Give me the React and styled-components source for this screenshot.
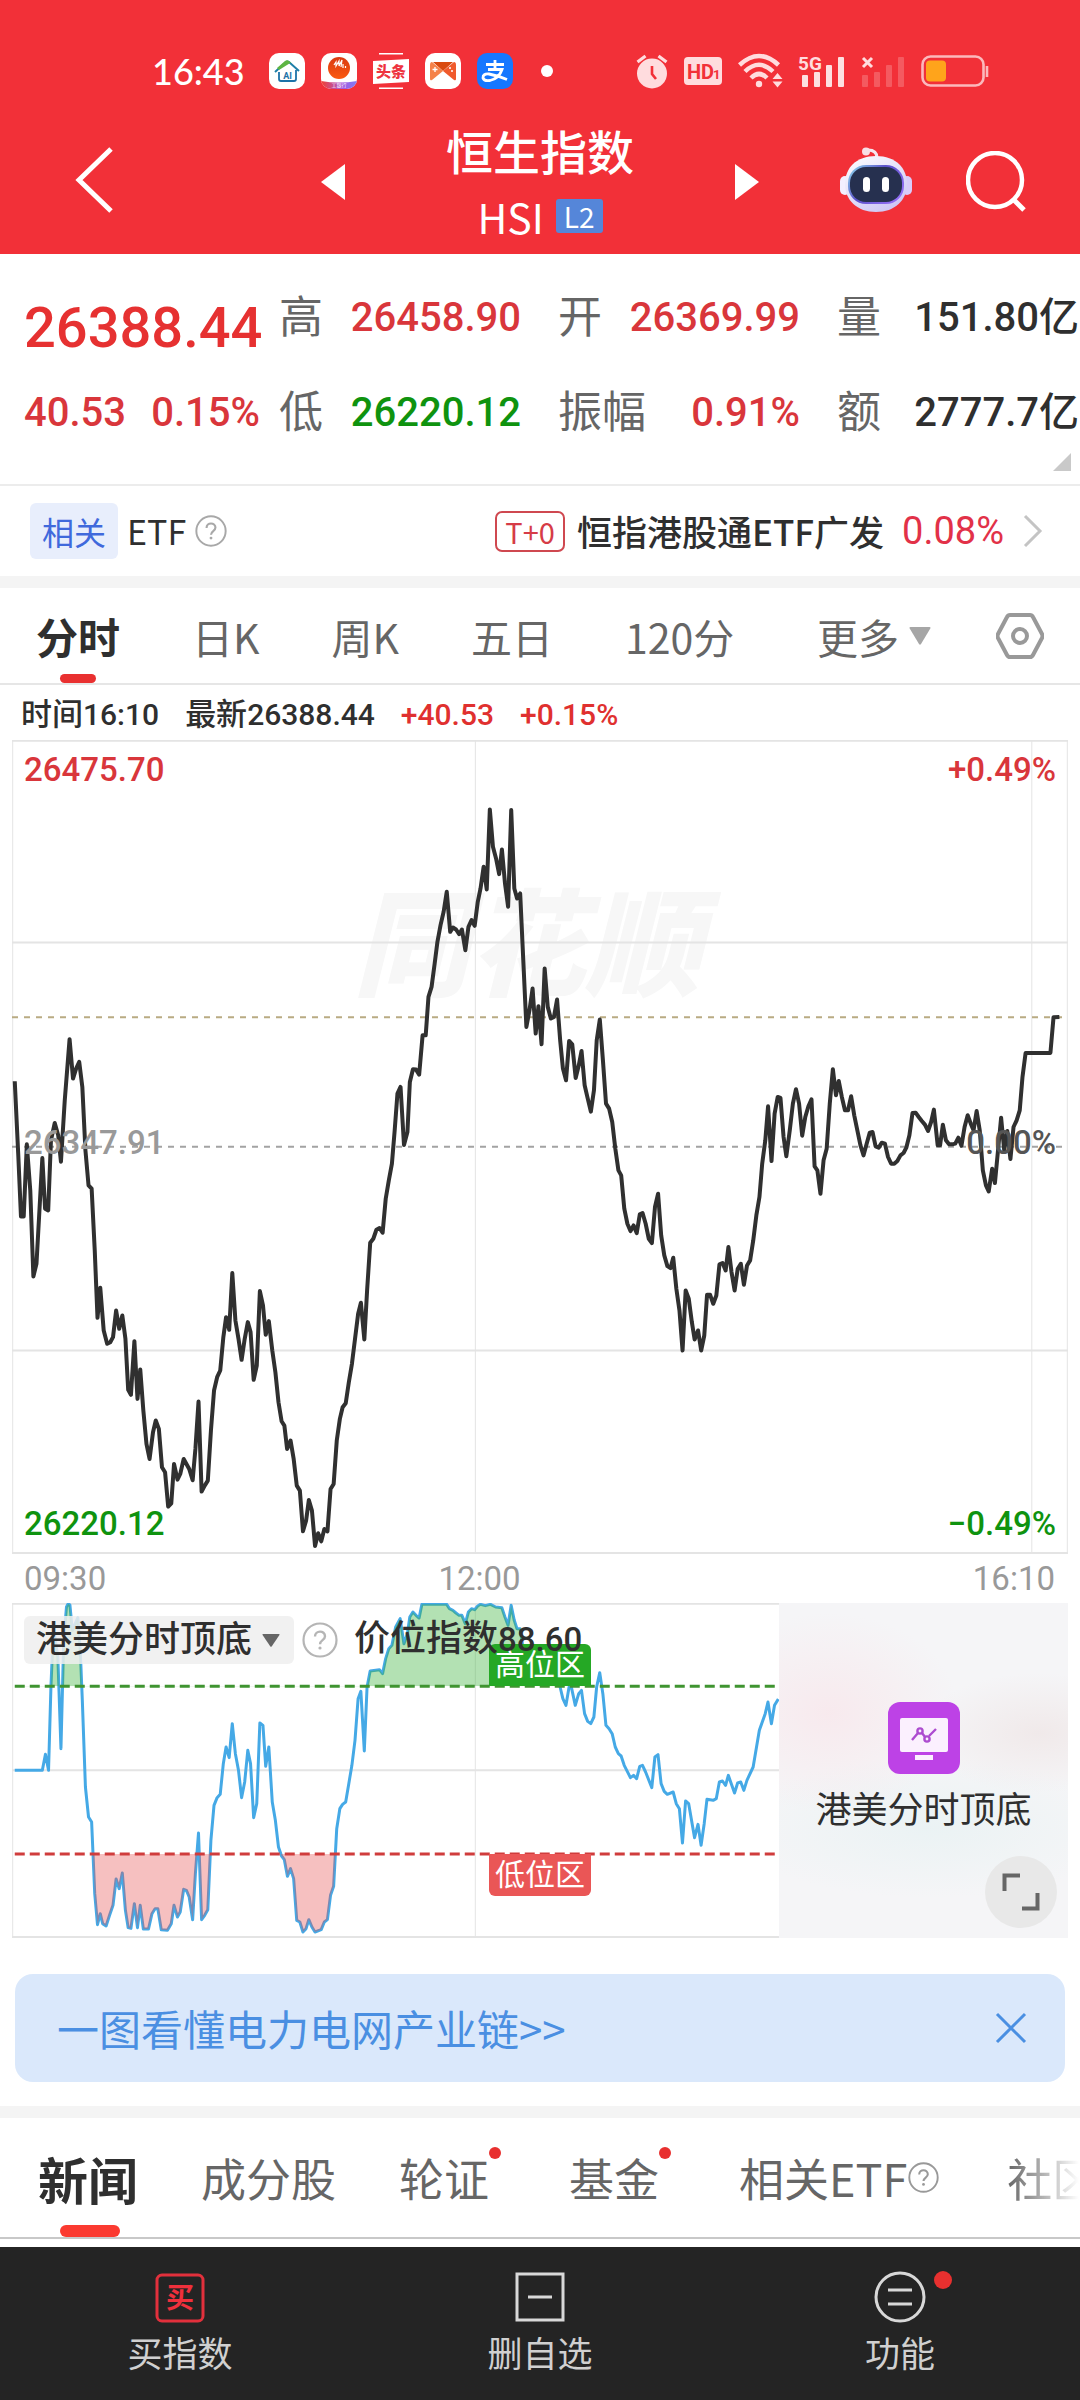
import React from "react";
import styled, { createGlobalStyle } from "styled-components";

const GlobalStyle = createGlobalStyle`
  * {
    box-sizing: border-box;
  }

  body {
    margin: 0;
    background-color: #ffffff;
    color: #2f2f2f;
    font-family: Roboto, "Noto Sans CJK SC", sans-serif;
  }

  button,
  select {
    margin: 0;
    padding: 0;
    border: none;
    background: none;
    color: inherit;
    font: inherit;
    cursor: pointer;
  }

  svg {
    display: block;
    flex-shrink: 0;
  }
`;

const colors = {
  brand: "#f23038",
  up: "#d9363b",
  down: "#0f930f",
  text: "#2f2f2f",
  muted: "#666666",
  axis: "#999999",
  line: "#e6e6e6",
};

const Page = styled.div`
  width: 100%;
  overflow: hidden;
`;

/* ---------- header ---------- */

const Header = styled.header`
  background-color: ${colors.brand};
  color: #ffffff;
`;

const StatusBar = styled.div`
  display: flex;
  align-items: center;
  justify-content: space-between;
  height: 104px;
  padding: 38px 91px 0 152px;
`;

const StatusGroup = styled.div`
  display: flex;
  align-items: center;
  gap: ${(props) => props.$gap}px;
`;

const Clock = styled.time`
  margin-right: 8px;
  font-family: Lato, sans-serif;
  font-size: 36px;
  line-height: 36px;
  font-weight: 500;
`;

const Dot = styled.span`
  width: 12px;
  height: 12px;
  margin-left: 12px;
  border-radius: 50%;
  background-color: #ffffff;
`;

const NavBar = styled.div`
  display: grid;
  grid-template-columns: 1fr 440px 1fr;
  align-items: center;
  height: 150px;
  padding-top: 6px;
`;

const NavBack = styled.div`
  padding-left: 75px;
`;

const NavCenter = styled.div`
  display: flex;
  align-items: center;
  justify-content: space-between;
`;

const NavActions = styled.div`
  display: flex;
  align-items: center;
  justify-content: flex-end;
  gap: 54px;
  padding-right: 54px;
`;

const TitleBlock = styled.div`
  padding-top: 8px;
  text-align: center;
`;

const Title = styled.h1`
  margin: 0;
  font-size: 47px;
  line-height: 60px;
  font-weight: 500;
`;

const Code = styled.div`
  display: flex;
  align-items: center;
  justify-content: center;
  gap: 12px;
  font-family: "Noto Sans CJK SC", sans-serif;
  font-size: 41px;
  line-height: 64px;
`;

const LevelBadge = styled.span`
  padding: 0 8px;
  border-radius: 3px;
  background-color: #5586d9;
  font-size: 28px;
  line-height: 34px;
`;

/* ---------- quote ---------- */

const Quote = styled.section`
  position: relative;
  display: flex;
  gap: 19px;
  height: 232px;
  padding: 32px 1px 0 24px;
  border-bottom: 2px solid #ececec;
`;

const PriceBlock = styled.div`
  display: flex;
  flex-direction: column;
  gap: 21px;
  width: 236px;
  padding-top: 10px;
`;

const Price = styled.strong`
  color: #e63131;
  font-size: 56px;
  line-height: 64px;
  font-weight: 500;
`;

const Change = styled.div`
  display: flex;
  align-items: center;
  justify-content: space-between;
  color: ${colors.up};
  font-size: 40px;
  line-height: 64px;
  font-weight: 500;
`;

const StatGrid = styled.div`
  display: grid;
  flex: 1;
  grid-template-columns: repeat(3, 1fr);
  align-content: start;
  gap: 31px 37px;
`;

const Stat = styled.div`
  display: flex;
  align-items: center;
  justify-content: space-between;
  line-height: 64px;
  white-space: nowrap;
`;

const StatLabel = styled.span`
  color: ${colors.muted};
  font-size: 44px;
`;

const StatValue = styled.span`
  color: ${(props) => props.$color || colors.text};
  font-size: 40px;
  font-weight: 500;
`;

const Corner = styled.svg`
  position: absolute;
  right: 9px;
  bottom: 13px;
`;

/* ---------- related ETF ---------- */

const EtfRow = styled.section`
  display: flex;
  align-items: center;
  justify-content: space-between;
  height: 102px;
  padding: 0 36px 0 30px;
  border-bottom: 12px solid #f4f4f4;
  font-family: "Noto Sans CJK SC", sans-serif;
`;

const EtfSide = styled.div`
  display: flex;
  align-items: center;
  gap: 9px;
  font-size: 34px;
  line-height: 56px;
`;

const RelatedTag = styled.span`
  padding: 0 12px;
  border-radius: 6px;
  background-color: #e8eefc;
  color: #4069dc;
  font-size: 32px;
`;

const EtfLink = styled.a`
  display: flex;
  align-items: center;
  color: ${colors.text};
  font-size: 35px;
  line-height: 56px;
  font-weight: 500;
  text-decoration: none;
`;

const T0Tag = styled.span`
  margin-right: 12px;
  padding: 0 8px;
  border: 2px solid #cf4850;
  border-radius: 7px;
  color: #d63c47;
  font-size: 29px;
  line-height: 37px;
  font-weight: 400;
`;

const EtfChange = styled.span`
  margin: 0 18px;
  color: #e23148;
  font-family: Roboto, sans-serif;
  font-size: 38px;
  font-weight: 400;
`;

/* ---------- period tabs ---------- */

const PeriodBar = styled.nav`
  display: flex;
  align-items: stretch;
  gap: 65px;
  height: 97px;
  padding: 0 36px;
  border-bottom: 2px solid ${colors.line};
  font-family: "Noto Sans CJK SC", sans-serif;
`;

const PeriodTabs = styled.div`
  display: flex;
  flex: 1;
  align-items: stretch;
  gap: 72px;
`;

const PeriodTab = styled.button`
  position: relative;
  display: flex;
  align-items: center;
  gap: 10px;
  color: ${(props) => (props.$active ? colors.text : colors.muted)};
  font-size: ${(props) => (props.$active ? 42 : 41)}px;
  font-weight: ${(props) => (props.$active ? 700 : 400)};

  &:last-child {
    margin-left: auto;
  }

  &::after {
    content: "";
    display: ${(props) => (props.$active ? "block" : "none")};
    position: absolute;
    left: 50%;
    bottom: 0;
    width: 36px;
    height: 9px;
    margin-left: -18px;
    border-radius: 5px;
    background-color: #e93030;
  }
`;

const InfoLine = styled.div`
  display: flex;
  align-items: center;
  gap: 26px;
  height: 55px;
  padding: 4px 21px 0;
  font-size: 31px;
  font-weight: 500;
  line-height: 48px;
`;

const InfoNumber = styled.span`
  color: ${(props) => props.$color || "inherit"};
  font-size: 30px;
`;

/* ---------- price chart ---------- */

const ChartArea = styled.section`
  margin: 0 12px;
`;

const PriceChart = styled.div`
  position: relative;
  height: 814px;
`;

const ChartSvg = styled.svg`
  position: relative;
  width: 100%;
  height: 100%;
`;

const Watermark = styled.div`
  position: absolute;
  top: 126px;
  left: 0;
  width: 100%;
  padding-right: 26px;
  color: #f7f7f7;
  font-family: "Noto Sans CJK SC", sans-serif;
  font-size: 116px;
  font-style: italic;
  font-weight: 900;
  line-height: 140px;
  text-align: center;
`;

const ChartLabel = styled.span`
  position: absolute;
  top: ${(props) => props.$top}px;
  ${(props) => props.$side}: 12px;
  color: ${(props) => props.$color};
  font-size: 33px;
  font-weight: 500;
  line-height: 40px;
`;

const TimeAxis = styled.div`
  display: grid;
  grid-template-columns: 1fr 1fr 1fr;
  padding: 4px 13px 4px 12px;
  color: ${colors.axis};
  font-size: 33px;
  line-height: 41px;

  span:nth-child(2) {
    padding-right: 120px;
    text-align: center;
  }

  span:nth-child(3) {
    text-align: right;
  }
`;

/* ---------- indicator ---------- */

const Indicator = styled.div`
  display: grid;
  grid-template-columns: 1fr 289px;
  grid-template-rows: 100%;
  height: 335px;
`;

const IndicatorPlot = styled.div`
  position: relative;
`;

const IndicatorBar = styled.div`
  position: absolute;
  top: 12px;
  left: 12px;
  display: flex;
  align-items: center;
  font-size: 36px;
  font-weight: 500;
  line-height: 48px;
  white-space: nowrap;
`;

const IndicatorSelect = styled.label`
  position: relative;
  margin-right: 8px;
  border-radius: 6px;
  background-color: rgba(238, 238, 238, 0.85);

  select {
    height: 48px;
    padding: 0 41px 0 12px;
    appearance: none;
    line-height: 48px;
  }

  svg {
    position: absolute;
    top: 18px;
    right: 14px;
    pointer-events: none;
  }
`;

const IndicatorValue = styled.span`
  margin-left: 16px;
`;

const IndicatorNumber = styled.span`
  font-size: 33px;
`;

const ZoneTag = styled.span`
  position: absolute;
  left: 477px;
  top: ${(props) => props.$top}px;
  padding: 0 6px;
  border-radius: ${(props) => (props.$low ? "0 0 6px 6px" : "6px 6px 0 0")};
  background-color: ${(props) => (props.$low ? "#ea5656" : "#25a825")};
  color: #ffffff;
  font-size: 30px;
  line-height: 42px;
`;

const PromoCard = styled.div`
  position: relative;
  display: flex;
  flex-direction: column;
  align-items: center;
  padding-top: 99px;
  background-color: #f5f5f7;
  background-image: radial-gradient(
      ellipse 130px 100px at 50px 110px,
      rgba(250, 222, 228, 0.5),
      rgba(250, 222, 228, 0)
    ),
    radial-gradient(
      ellipse 120px 60px at 260px 130px,
      rgba(238, 228, 228, 0.7),
      rgba(238, 228, 228, 0)
    ),
    radial-gradient(
      ellipse 200px 70px at 150px 225px,
      rgba(232, 242, 243, 0.8),
      rgba(232, 242, 243, 0)
    );
  font-size: 36px;
  line-height: 48px;
`;

const PromoText = styled.span`
  margin-top: 13px;
`;

const ExpandButton = styled.button`
  position: absolute;
  right: 11px;
  bottom: 10px;
  display: grid;
  place-items: center;
  width: 72px;
  height: 72px;
  border-radius: 50%;
  background-color: #e8e8e8;
`;

/* ---------- banner and news tabs ---------- */

const Banner = styled.aside`
  display: flex;
  align-items: center;
  justify-content: space-between;
  height: 108px;
  margin: 36px 15px 24px;
  padding: 0 38px 0 42px;
  border-radius: 18px;
  background-color: #dae8fb;
  color: #4a8fe2;
`;

const BannerLink = styled.a`
  color: inherit;
  font-family: "Noto Sans CJK SC", sans-serif;
  font-size: 42px;
  line-height: 60px;
  text-decoration: none;
`;

const NewsTabs = styled.nav`
  display: flex;
  gap: 63px;
  height: 133px;
  padding-left: 38px;
  border-top: 12px solid #f4f4f4;
  border-bottom: 2px solid #c8c8c8;
  overflow: hidden;
  font-family: "Noto Sans CJK SC", sans-serif;
`;

const NewsTab = styled.button`
  position: relative;
  display: flex;
  align-items: center;
  flex-shrink: 0;
  color: ${(props) => (props.$active ? colors.text : colors.muted)};
  font-size: ${(props) => (props.$active ? 50 : 45)}px;
  font-weight: ${(props) => (props.$active ? 700 : 400)};
  -webkit-mask-image: ${(props) =>
    props.$fading
      ? "linear-gradient(to right, #000000, rgba(0, 0, 0, 0) 80%)"
      : "none"};

  &::after {
    content: "";
    display: ${(props) => (props.$active ? "block" : "none")};
    position: absolute;
    left: 50%;
    bottom: 0;
    width: 60px;
    height: 12px;
    margin-left: -28px;
    border-radius: 6px;
    background-color: #fb3a30;
  }
`;

const NewDot = styled.span`
  align-self: flex-start;
  width: 12px;
  height: 12px;
  margin: 29px 5px 0 0;
  border-radius: 50%;
  background-color: #e8302f;
`;

const TabHelp = styled.span`
  padding: 0 5px 0 1px;
`;

/* ---------- bottom bar ---------- */

const BottomBar = styled.footer`
  display: grid;
  grid-template-columns: repeat(3, 1fr);
  margin-top: 8px;
  height: 153px;
  background-color: #242424;
`;

const BottomButton = styled.button`
  display: flex;
  flex-direction: column;
  align-items: center;
  padding-top: 24px;
  color: #d0d0d0;
  font-size: 35px;
  line-height: 48px;
`;

const BottomIcon = styled.span`
  position: relative;
  margin-bottom: 9px;
`;

const AlertDot = styled.span`
  position: absolute;
  top: 0;
  right: -26px;
  width: 18px;
  height: 18px;
  border-radius: 50%;
  background-color: #e8302f;
`;

/* ---------- data ---------- */

const stats = [
  { label: "高", value: "26458.90", color: colors.up },
  { label: "开", value: "26369.99", color: colors.up },
  { label: "量", value: "151.80亿" },
  { label: "低", value: "26220.12", color: colors.down },
  { label: "振幅", value: "0.91%", color: colors.up },
  { label: "额", value: "2777.7亿" },
];

const pricePoints = `45,1023 55,1240 63,1428 71,1428 80,1212 90,1350 99,1608 108,1570 125,1253 133,1405
142,1410 150,1200 161,1148 171,1185 179,1264 190,1080 204,897 214,1015 223,985 232,965
241,1040 250,1230 259,1335 268,1345 277,1530 285,1732 293,1642 303,1770 313,1810 322,1805
330,1790 339,1710 348,1765 357,1725 366,1795 374,1948 382,1963 392,1802 401,1975 409,1887
418,2010 427,2110 436,2155 446,2075 454,2040 463,2065 472,2180 481,2195 490,2298 499,2288
507,2170 517,2217 525,2200 535,2155 551,2185 561,2219 569,2125 578,1983 587,2253 596,2235
605,2220 614,2070 623,1950 632,1910 641,1890 650,1790 658,1730 667,1768 676,1598 685,1740
694,1795 703,1858 712,1795 721,1745 729,1775 738,1918 747,1875 756,1652 765,1695 773,1783
782,1742 792,1830 801,1895 810,1985 819,2042 827,2055 835,2125 845,2100 854,2155 863,2235
872,2250 881,2372 890,2340 898,2278 907,2310 916,2416 925,2378 934,2402 943,2365 952,2372
961,2245 970,2230 979,2100 988,2035 996,2000 1005,1988 1014,1925 1023,1870 1032,1795 1041,1720
1049,1687 1059,1797 1067,1650 1076,1507 1085,1495 1094,1468 1103,1463 1112,1477 1121,1375 1130,1320
1139,1270 1147,1170 1155,1060 1164,1040 1174,1214 1184,1175 1191,1025 1200,987 1209,988 1218,1003
1228,885 1237,885 1245,770 1254,740 1263,670 1271,605 1280,555 1289,515 1298,455 1308,575
1316,562 1325,568 1334,582 1342,568 1352,630 1361,560 1370,540 1379,557 1388,485 1396,445
1405,380 1414,448 1423,208 1432,320 1441,355 1450,402 1458,328 1467,430 1476,500 1485,210
1494,445 1502,475 1511,460 1520,660 1529,860 1538,810 1547,745 1556,880 1564,798 1573,912
1582,685 1591,800 1600,835 1609,830 1618,778 1627,900 1635,985 1644,1020 1653,902 1662,912
1672,1013 1681,975 1689,932 1698,1035 1707,1075 1716,1114 1725,1050 1733,900 1742,838 1751,960
1760,1090 1769,1105 1778,1145 1787,1225 1796,1290 1804,1305 1813,1405 1822,1450 1831,1472 1840,1455
1849,1478 1858,1422 1866,1418 1875,1450 1884,1495 1893,1508 1902,1400 1911,1360 1920,1485 1929,1545
1938,1577 1947,1583 1955,1552 1964,1645 1973,1710 1982,1830 1991,1650 2000,1675 2009,1745 2017,1797
2027,1770 2036,1830 2045,1785 2053,1663 2062,1663 2071,1690 2080,1665 2089,1572 2098,1568 2107,1590
2115,1520 2124,1595 2133,1650 2142,1585 2151,1570 2160,1633 2169,1575 2178,1560 2187,1500 2196,1425
2205,1370 2213,1270 2222,1200 2230,1098 2240,1262 2249,1120 2258,1070 2266,1073 2275,1190 2283,1248
2293,1170 2302,1090 2311,1047 2320,1090 2329,1186 2338,1130 2347,1098 2356,1077 2365,1278 2373,1290
2382,1360 2391,1260 2400,1225 2409,1090 2418,987 2427,1065 2435,1022 2444,1070 2453,1110 2462,1110
2471,1068 2480,1125 2489,1170 2498,1215 2507,1245 2516,1210 2525,1177 2533,1175 2542,1218 2551,1222
2560,1207 2569,1210 2578,1250 2587,1270 2596,1270 2605,1262 2614,1245 2623,1238 2631,1222 2640,1185
2649,1118 2658,1117 2667,1130 2676,1142 2685,1153 2694,1172 2703,1145 2711,1108 2722,1215 2729,1215
2737,1153 2746,1200 2755,1212 2764,1212 2773,1210 2782,1192 2791,1216 2800,1160 2809,1125 2818,1150
2826,1170 2835,1112 2844,1170 2853,1290 2862,1335 2870,1353 2880,1285 2888,1328 2897,1230 2906,1132
2915,1230 2924,1172 2933,1256 2942,1160 2951,1140 2960,1110 2968,1010 2977,938 3049,938 3058,831 3075,830`;

const indexPoints = `45,540 125,540 134,492 143,540 150,288 154,190 160,130 170,200 179,475 187,150
195,50 200,40 205,44 212,120 228,82 235,180 241,330 250,590 259,680 268,695
277,910 285,1003 293,970 300,1000 310,1007 320,975 330,945 339,866 348,895 357,848
366,960 374,1012 382,1014 392,940 401,1012 409,945 418,1016 433,1016 443,970 452,955
460,955 470,1018 488,1020 499,1000 507,945 517,980 525,965 535,897 543,900 551,920
561,988 569,850 578,728 587,988 596,975 605,958 614,750 623,645 632,622 641,612
650,520 658,470 667,502 676,400 685,490 694,540 703,622 712,575 721,480 729,520
738,682 747,640 756,398 765,405 773,528 782,470 792,635 801,690 810,770 819,797
827,808 836,858 845,835 854,865 863,990 872,995 881,1025 890,1015 898,988 907,1010
916,1025 934,1018 943,995 952,988 961,915 970,888 979,715 988,655 996,642 1005,635
1014,580 1023,525 1032,450 1041,325 1049,303 1059,482 1067,290 1076,242 1103,238 1112,250
1121,205 1130,175 1139,165 1150,110 1163,85 1174,160 1184,130 1191,80 1200,65 1209,75
1218,83 1226,42 1298,42 1306,55 1316,60 1325,68 1334,75 1342,75 1352,100 1361,65
1370,55 1379,58 1388,47 1396,42 1410,46 1425,42 1440,50 1458,52 1467,80 1476,105
1485,45 1494,90 1502,115 1511,115 1529,240 1547,210 1565,250 1582,200 1600,235 1618,225
1627,290 1635,325 1644,345 1653,290 1660,292 1671,345 1681,310 1689,300 1698,370 1707,393
1716,400 1725,380 1733,290 1742,247 1751,310 1760,405 1769,415 1778,430 1787,470 1796,490
1804,497 1813,525 1831,562 1840,555 1849,565 1858,528 1866,525 1875,545 1893,592 1902,500
1911,493 1920,580 1929,603 1938,612 1955,605 1964,640 1973,655 1982,758 1991,632 2000,640
2017,742 2027,702 2036,765 2045,700 2053,627 2071,630 2080,625 2089,575 2098,572 2107,585
2115,555 2133,608 2142,578 2151,575 2160,600 2169,570 2187,530 2205,420 2222,370 2230,335
2240,400 2249,345 2260,326`;

/* ---------- icons ---------- */

const HelpIcon = ({ size, color = "#b5b5b5" }) => (
  <svg width={size} height={size} viewBox="0 0 36 36" fill="none" stroke={color}>
    <circle cx="18" cy="18" r="16.5" strokeWidth="2.2" />
    <path
      d="M13 14.5c0-6.500 10-6.500 10-.3 0 4-5 3.800-5 8"
      strokeWidth="2.400"
    />
    <circle cx="18" cy="26" r="1.600" fill={color} stroke="none" />
  </svg>
);

const TriangleDown = ({ width, height, color }) => (
  <svg width={width} height={height} viewBox="0 0 22 18" preserveAspectRatio="none">
    <path d="M1.500 0h19q1.500 0 .8 1.500L12 17q-1 1.400-2 0L.7 1.500Q0 0 1.500 0z" fill={color} />
  </svg>
);

const HomeAiIcon = () => (
  <svg width="36" height="36" viewBox="0 0 36 36">
    <rect width="36" height="36" rx="10" fill="#ffffff" />
    <path d="M6 19 17 9q1.500-1 3 0l10 9" fill="none" stroke="#1f7fa8" strokeWidth="2" />
    <path d="M8 15l8-7q2-1.500 4 0l2 1.500L10 17z" fill="#5db542" />
    <path d="M10 19v7q0 2 2 2h13q2 0 2-2v-9" fill="none" stroke="#1d72a8" strokeWidth="1.800" />
    <text x="18.500" y="25.500" fontSize="9" fontWeight="700" textAnchor="middle" fill="#1d72a8">
      AI
    </text>
  </svg>
);

const BankIcon = () => (
  <svg width="36" height="36" viewBox="0 0 36 36">
    <defs>
      <linearGradient id="bankBall" x1="0" y1="0" x2="0" y2="1">
        <stop offset="0" stopColor="#d93a12" />
        <stop offset="1" stopColor="#fb5a10" />
      </linearGradient>
      <linearGradient id="bankStrip" x1="0" y1="0" x2="1" y2="0">
        <stop offset="0" stopColor="#f2402f" />
        <stop offset="0.600" stopColor="#a45be0" />
        <stop offset="1" stopColor="#7f7cf5" />
      </linearGradient>
      <clipPath id="bankClip">
        <rect width="36" height="36" rx="10" />
      </clipPath>
    </defs>
    <g clipPath="url(#bankClip)">
      <rect width="36" height="36" fill="#ffffff" />
      <path d="M0 28q18 3 36 0v8H0z" fill="url(#bankStrip)" />
    </g>
    <circle cx="18" cy="15" r="11" fill="url(#bankBall)" />
    <path
      d="M13 12l2-3v4l3-5v5l3-6-1 7M22 15v-4M24.500 15v-2"
      fill="none"
      stroke="#ffffff"
      strokeWidth="1.200"
    />
    <text x="18" y="34" fontSize="5" textAnchor="middle" fill="#ffffff">
      工银行
    </text>
  </svg>
);

const NewsIcon = () => (
  <svg width="36" height="36" viewBox="0 0 36 36">
    <path d="M6 .8h24M6 35.200h24" stroke="#ffffff" strokeWidth="1.500" />
    <path d="M0 8l36-2v23L0 31z" fill="#ffffff" />
    <text x="18" y="24" fontSize="15" fontWeight="900" textAnchor="middle" fill="#ee3340">
      头条
    </text>
  </svg>
);

const GameIcon = () => (
  <svg width="36" height="36" viewBox="0 0 36 36">
    <rect width="36" height="36" rx="10" fill="#ffffff" />
    <path d="M8 9h20l-10 9z" fill="#d94a0e" />
    <path d="M7 9q-2 0-2 3v14q0 2 2 1l11-9z" fill="#f58249" />
    <path d="M29 9q2 0 2 3v14q0 2-2 1l-11-9z" fill="#f05a2c" />
    <path d="M10 14v5M7.500 16.500h5" stroke="#ffffff" strokeWidth="1.300" />
    <circle cx="25" cy="15" r="1" fill="#ffffff" />
    <circle cx="27" cy="18" r="1" fill="#ffffff" />
  </svg>
);

const PayIcon = () => (
  <svg width="36" height="36" viewBox="0 0 36 36">
    <rect width="36" height="36" rx="10" fill="#1677ff" />
    <path
      d="M9 11.500h18M18 7v9M11 16.500h14q-3 9-12 11-6 .8-7-2.500-.3-4.500 6-4 8 1.500 18 5.500"
      fill="none"
      stroke="#ffffff"
      strokeWidth="2.800"
    />
  </svg>
);

const AlarmIcon = () => (
  <svg width="32" height="36" viewBox="0 0 32 36">
    <circle cx="16" cy="20.500" r="15" fill="#ffdcde" />
    <path d="M1.500 9l8-6M30.500 9l-8-6" stroke="#ffdcde" strokeWidth="3.200" />
    <path d="M16 13v8l4 5" fill="none" stroke={colors.brand} strokeWidth="2.600" />
  </svg>
);

const HdIcon = () => (
  <svg width="40" height="30" viewBox="0 0 40 30">
    <rect x="1" y="1" width="38" height="28" rx="4" fill="#ffdcde" />
    <text x="4" y="22.500" fontSize="20" fontWeight="700" fill={colors.brand}>
      HD
    </text>
    <text x="30" y="22.500" fontSize="13" fontWeight="700" fill={colors.brand}>
      1
    </text>
  </svg>
);

const WifiIcon = () => (
  <svg width="45" height="36" viewBox="0 0 45 36" fill="none" stroke="#ffdcde">
    <path d="M1.500 12Q21 -6 40.500 12" strokeWidth="4.500" />
    <path d="M7 18.500Q21 5 35 18.500" strokeWidth="4.500" />
    <path d="M13 25Q21 17 29 25" strokeWidth="4.500" />
    <circle cx="21" cy="31" r="3.200" fill="#ffdcde" stroke="none" />
    <path d="M39.500 20l5 6h-10zM39.500 34.500l5-6h-10z" fill="#ffdcde" stroke="none" />
  </svg>
);

const SignalBars = ({ opacity }) => (
  <g fill="#ffffff" opacity={opacity}>
    <rect x="4" y="22" width="6" height="12" rx="1" />
    <rect x="16" y="19" width="6" height="15" rx="1" />
    <rect x="28" y="12" width="6" height="22" rx="1" />
    <rect x="40" y="4" width="6" height="30" rx="1" />
  </g>
);

const Signal5gIcon = () => (
  <svg width="48" height="36" viewBox="0 0 48 36" overflow="visible">
    <SignalBars opacity="0.850" />
    <text x="0" y="17" fontSize="19" fontWeight="700" fill="#ffdcde">
      5G
    </text>
  </svg>
);

const NoSignalIcon = () => (
  <svg width="45" height="36" viewBox="3 0 45 36">
    <SignalBars opacity="0.200" />
    <path d="M5 5l9 9M14 5l-9 9" stroke="#ffdcde" strokeWidth="3" />
  </svg>
);

const BatteryIcon = () => (
  <svg width="68" height="32" viewBox="0 0 68 32">
    <rect x="1.500" y="1.500" width="61" height="29" rx="8" fill="none" stroke="#fbb9bc" strokeWidth="2.600" />
    <rect x="5" y="5.500" width="20" height="21" rx="4" fill="#ffa41b" />
    <path d="M66 11v11" stroke="#fbb9bc" strokeWidth="2.600" />
  </svg>
);

const RobotIcon = () => (
  <svg width="72" height="70" viewBox="0 0 72 70">
    <defs>
      <linearGradient id="robotShell" x1="0" y1="0" x2="0.600" y2="1">
        <stop offset="0" stopColor="#ffffff" />
        <stop offset="1" stopColor="#cfc8f5" />
      </linearGradient>
      <linearGradient id="robotRim" x1="0" y1="0" x2="1" y2="0.600">
        <stop offset="0" stopColor="#8fe0ee" />
        <stop offset="0.500" stopColor="#5b50c9" />
        <stop offset="1" stopColor="#8f6cf2" />
      </linearGradient>
    </defs>
    <path d="M37 11q0-8-9-8" fill="none" stroke="#f5e6ee" strokeWidth="3" />
    <circle cx="26" cy="4.500" r="4" fill="#f8dfe6" />
    <rect x="0" y="29" width="10" height="19" rx="5" fill="#f3efff" />
    <rect x="62" y="29" width="10" height="19" rx="5" fill="#d9ccfa" />
    <path
      d="M36 9c20 0 31 12 31 28S55 65 36 65 5 53 5 37 16 9 36 9z"
      fill="url(#robotShell)"
    />
    <rect x="8" y="18" width="56" height="39" rx="18" fill="url(#robotRim)" />
    <rect x="10" y="20" width="52" height="35" rx="16" fill="#26304f" />
    <rect x="23" y="30" width="7" height="15" rx="3.500" fill="#ffffff" />
    <rect x="42" y="30" width="7" height="15" rx="3.500" fill="#ffffff" />
  </svg>
);

const PriceSvg = () => (
  <ChartSvg
    viewBox="37 0 3063 2440"
    preserveAspectRatio="none"
    fill="none"
    role="img"
    aria-label="分时"
  >
    <g stroke="#e4e4e4" strokeWidth="2">
      <path d="M37 2H3100M37 2437H3100M37 607H3100M37 1830H3100" vectorEffect="non-scaling-stroke" />
      <path
        d="M39 0V2440M3098 0V2440M1381 0V2440M2995 0V2440"
        vectorEffect="non-scaling-stroke"
        strokeWidth="1"
      />
    </g>
    <path
      d="M37 831H3085"
      stroke="#b9ab83"
      strokeWidth="2"
      strokeDasharray="6 6"
      vectorEffect="non-scaling-stroke"
    />
    <path
      d="M37 1219H3085"
      stroke="#a3a3a3"
      strokeWidth="2"
      strokeDasharray="6 6"
      vectorEffect="non-scaling-stroke"
    />
    <polyline
      points={pricePoints}
      stroke="#303030"
      strokeWidth="4"
      strokeLinejoin="round"
      vectorEffect="non-scaling-stroke"
    />
  </ChartSvg>
);

const IndicatorSvg = () => (
  <ChartSvg
    viewBox="37 38 2225 1005"
    preserveAspectRatio="none"
    fill="none"
    role="img"
    aria-label="价位指数"
  >
    <defs>
      <clipPath id="highZone">
        <rect x="37" y="38" width="1590" height="250" />
      </clipPath>
      <clipPath id="lowZone">
        <rect x="37" y="791" width="2225" height="252" />
      </clipPath>
    </defs>
    <g stroke="#e4e4e4">
      <path d="M37 40H2262M37 1040H2262M37 540H2262" strokeWidth="2" vectorEffect="non-scaling-stroke" />
      <path d="M39 38V1043M1381 38V1043" strokeWidth="1" vectorEffect="non-scaling-stroke" />
    </g>
    <polyline
      points={indexPoints}
      stroke="#45a9e6"
      strokeWidth="3"
      strokeLinejoin="round"
      vectorEffect="non-scaling-stroke"
    />
    <polygon
      points={`45,288 ${indexPoints} 2260,288`}
      fill="rgba(55, 175, 55, 0.380)"
      clipPath="url(#highZone)"
    />
    <polygon
      points={`45,791 ${indexPoints} 2260,791`}
      fill="rgba(230, 75, 75, 0.350)"
      clipPath="url(#lowZone)"
    />
    <path
      d="M45 288H2250"
      stroke="#3f9430"
      strokeWidth="3"
      strokeDasharray="10 5"
      vectorEffect="non-scaling-stroke"
    />
    <path
      d="M45 791H2250"
      stroke="#d03c3c"
      strokeWidth="3"
      strokeDasharray="10 5"
      vectorEffect="non-scaling-stroke"
    />
  </ChartSvg>
);

/* ---------- page ---------- */

const App = () => {
  return (
    <Page>
      <GlobalStyle />
      <Header>
        <StatusBar>
          <StatusGroup $gap={16}>
            <Clock>16:43</Clock>
            <HomeAiIcon />
            <BankIcon />
            <NewsIcon />
            <GameIcon />
            <PayIcon />
            <Dot />
          </StatusGroup>
          <StatusGroup $gap={15}>
            <AlarmIcon />
            <HdIcon />
            <WifiIcon />
            <Signal5gIcon />
            <NoSignalIcon />
            <BatteryIcon />
          </StatusGroup>
        </StatusBar>
        <NavBar>
          <NavBack>
            <button aria-label="返回">
              <svg width="40" height="66" viewBox="0 0 40 66" fill="none">
                <path d="M36 2 4 33l32 31" stroke="#ffffff" strokeWidth="5" />
              </svg>
            </button>
          </NavBack>
          <NavCenter>
            <button aria-label="上一个">
              <svg width="26" height="36" viewBox="0 0 26 36">
                <path d="M25 0v36L1 18z" fill="#ffffff" />
              </svg>
            </button>
            <TitleBlock>
              <Title>恒生指数</Title>
              <Code>
                HSI <LevelBadge>L2</LevelBadge>
              </Code>
            </TitleBlock>
            <button aria-label="下一个">
              <svg width="26" height="36" viewBox="0 0 26 36">
                <path d="M1 0v36l24-18z" fill="#ffffff" />
              </svg>
            </button>
          </NavCenter>
          <NavActions>
            <button aria-label="助手">
              <RobotIcon />
            </button>
            <button aria-label="搜索">
              <svg width="60" height="62" viewBox="0 0 60 62" fill="none" stroke="#ffffff">
                <circle cx="29" cy="29" r="27" strokeWidth="4.500" />
                <path d="M47 48l11 11" strokeWidth="5" />
              </svg>
            </button>
          </NavActions>
        </NavBar>
      </Header>

      <Quote>
        <PriceBlock>
          <Price>26388.44</Price>
          <Change>
            <span>40.53</span>
            <span>0.15%</span>
          </Change>
        </PriceBlock>
        <StatGrid>
          {stats.map((item) => (
            <Stat key={item.label}>
              <StatLabel>{item.label}</StatLabel>
              <StatValue $color={item.color}>{item.value}</StatValue>
            </Stat>
          ))}
        </StatGrid>
        <Corner width="18" height="18" viewBox="0 0 18 18">
          <path d="M18 0v18H0z" fill="#c9c9c9" />
        </Corner>
      </Quote>

      <EtfRow>
        <EtfSide>
          <RelatedTag>相关</RelatedTag>
          <span>ETF</span>
          <HelpIcon size={32} color="#a8a8a8" />
        </EtfSide>
        <EtfLink href="#etf">
          <T0Tag>T+0</T0Tag>
          恒指港股通ETF广发
          <EtfChange>0.08%</EtfChange>
          <svg width="22" height="34" viewBox="0 0 22 34" fill="none">
            <path d="M3 2l15 15L3 32" stroke="#c4c4c4" strokeWidth="3" />
          </svg>
        </EtfLink>
      </EtfRow>

      <PeriodBar>
        <PeriodTabs>
          <PeriodTab $active>分时</PeriodTab>
          <PeriodTab>日K</PeriodTab>
          <PeriodTab>周K</PeriodTab>
          <PeriodTab>五日</PeriodTab>
          <PeriodTab>120分</PeriodTab>
          <PeriodTab>
            更多
            <TriangleDown width={22} height={18} color="#a6a6a6" />
          </PeriodTab>
        </PeriodTabs>
        <button aria-label="设置">
          <svg width="48" height="46" viewBox="0 0 48 46" fill="none" stroke="#999999">
            <path
              d="M14 2h20q2 0 3 2l9 17q1 2 0 4l-9 17q-1 2-3 2H14q-2 0-3-2L2 25q-1-2 0-4L11 4q1-2 3-2z"
              strokeWidth="4"
            />
            <circle cx="24" cy="23" r="7" strokeWidth="4" />
          </svg>
        </button>
      </PeriodBar>

      <InfoLine>
        <span>
          时间<InfoNumber>16:10</InfoNumber>
        </span>
        <span>
          最新<InfoNumber>26388.44</InfoNumber>
        </span>
        <InfoNumber $color="#e0302f">+40.53</InfoNumber>
        <InfoNumber $color="#e0302f">+0.15%</InfoNumber>
      </InfoLine>

      <ChartArea>
        <PriceChart>
          <Watermark>同花顺</Watermark>
          <PriceSvg />
          <ChartLabel $side="left" $top={10} $color={colors.up}>26475.70</ChartLabel>
          <ChartLabel $side="right" $top={10} $color={colors.up}>+0.49%</ChartLabel>
          <ChartLabel $side="left" $top={383} $color={colors.axis}>26347.91</ChartLabel>
          <ChartLabel $side="right" $top={383} $color="#555555">0.00%</ChartLabel>
          <ChartLabel $side="left" $top={764} $color={colors.down}>26220.12</ChartLabel>
          <ChartLabel $side="right" $top={764} $color={colors.down}>−0.49%</ChartLabel>
        </PriceChart>
        <TimeAxis>
          <span>09:30</span>
          <span>12:00</span>
          <span>16:10</span>
        </TimeAxis>
        <Indicator>
          <IndicatorPlot>
            <IndicatorSvg />
            <ZoneTag $top={41}>高位区</ZoneTag>
            <ZoneTag $top={251} $low>低位区</ZoneTag>
            <IndicatorBar>
              <IndicatorSelect>
                <select aria-label="指标">
                  <option>港美分时顶底</option>
                </select>
                <TriangleDown width={18} height={13} color="#666666" />
              </IndicatorSelect>
              <HelpIcon size={36} />
              <IndicatorValue>
                价位指数<IndicatorNumber>88.60</IndicatorNumber>
              </IndicatorValue>
            </IndicatorBar>
          </IndicatorPlot>
          <PromoCard>
            <svg width="72" height="72" viewBox="0 0 72 72">
              <rect width="72" height="72" rx="12" fill="#bd42e6" />
              <rect x="12" y="16" width="48" height="34" rx="2" fill="#fbf0fe" />
              <rect x="27" y="53" width="18" height="5" fill="#fbf0fe" />
              <g fill="none" stroke="#ad4cd0" strokeWidth="2.400">
                <path d="M24 38l6-7M34 31l3 4M41 34l7-7" />
                <circle cx="32" cy="29" r="2.600" />
                <circle cx="39" cy="37" r="2.600" />
              </g>
            </svg>
            <PromoText>港美分时顶底</PromoText>
            <ExpandButton aria-label="展开">
              <svg width="38" height="38" viewBox="0 0 38 38" fill="none" stroke="#666666">
                <path d="M2.500 18V2.500H18M20 35.500h15.500V20" strokeWidth="4" />
              </svg>
            </ExpandButton>
          </PromoCard>
        </Indicator>
      </ChartArea>

      <Banner>
        <BannerLink href="#grid">一图看懂电力电网产业链&gt;&gt;</BannerLink>
        <button aria-label="关闭">
          <svg width="32" height="32" viewBox="0 0 32 32" fill="none">
            <path d="M2 2l28 28M30 2 2 30" stroke="#4a8fe2" strokeWidth="3" />
          </svg>
        </button>
      </Banner>

      <NewsTabs>
        <NewsTab $active>新闻</NewsTab>
        <NewsTab>成分股</NewsTab>
        <NewsTab>
          轮证
          <NewDot />
        </NewsTab>
        <NewsTab>
          基金
          <NewDot />
        </NewsTab>
        <NewsTab>
          相关ETF
          <TabHelp>
            <HelpIcon size={31} color="#999999" />
          </TabHelp>
        </NewsTab>
        <NewsTab $fading>社区</NewsTab>
      </NewsTabs>

      <BottomBar>
        <BottomButton>
          <BottomIcon>
            <svg width="52" height="52" viewBox="0 0 52 52">
              <rect x="3" y="4" width="46" height="46" rx="5" fill="none" stroke="#e2303c" strokeWidth="3" />
              <text x="26" y="37" fontSize="28" fontWeight="700" textAnchor="middle" fill="#f0303c">
                买
              </text>
            </svg>
          </BottomIcon>
          买指数
        </BottomButton>
        <BottomButton>
          <BottomIcon>
            <svg width="52" height="52" viewBox="0 0 52 52" fill="none" stroke="#d8d8d8" strokeWidth="3">
              <rect x="3" y="3" width="46" height="46" />
              <path d="M14 26h24" />
            </svg>
          </BottomIcon>
          删自选
        </BottomButton>
        <BottomButton>
          <BottomIcon>
            <svg width="52" height="52" viewBox="0 0 52 52" fill="none" stroke="#d8d8d8" strokeWidth="3">
              <circle cx="26" cy="26" r="24" />
              <path d="M14 19h24M14 33h24" />
            </svg>
            <AlertDot />
          </BottomIcon>
          功能
        </BottomButton>
      </BottomBar>
    </Page>
  );
};

export default App;
